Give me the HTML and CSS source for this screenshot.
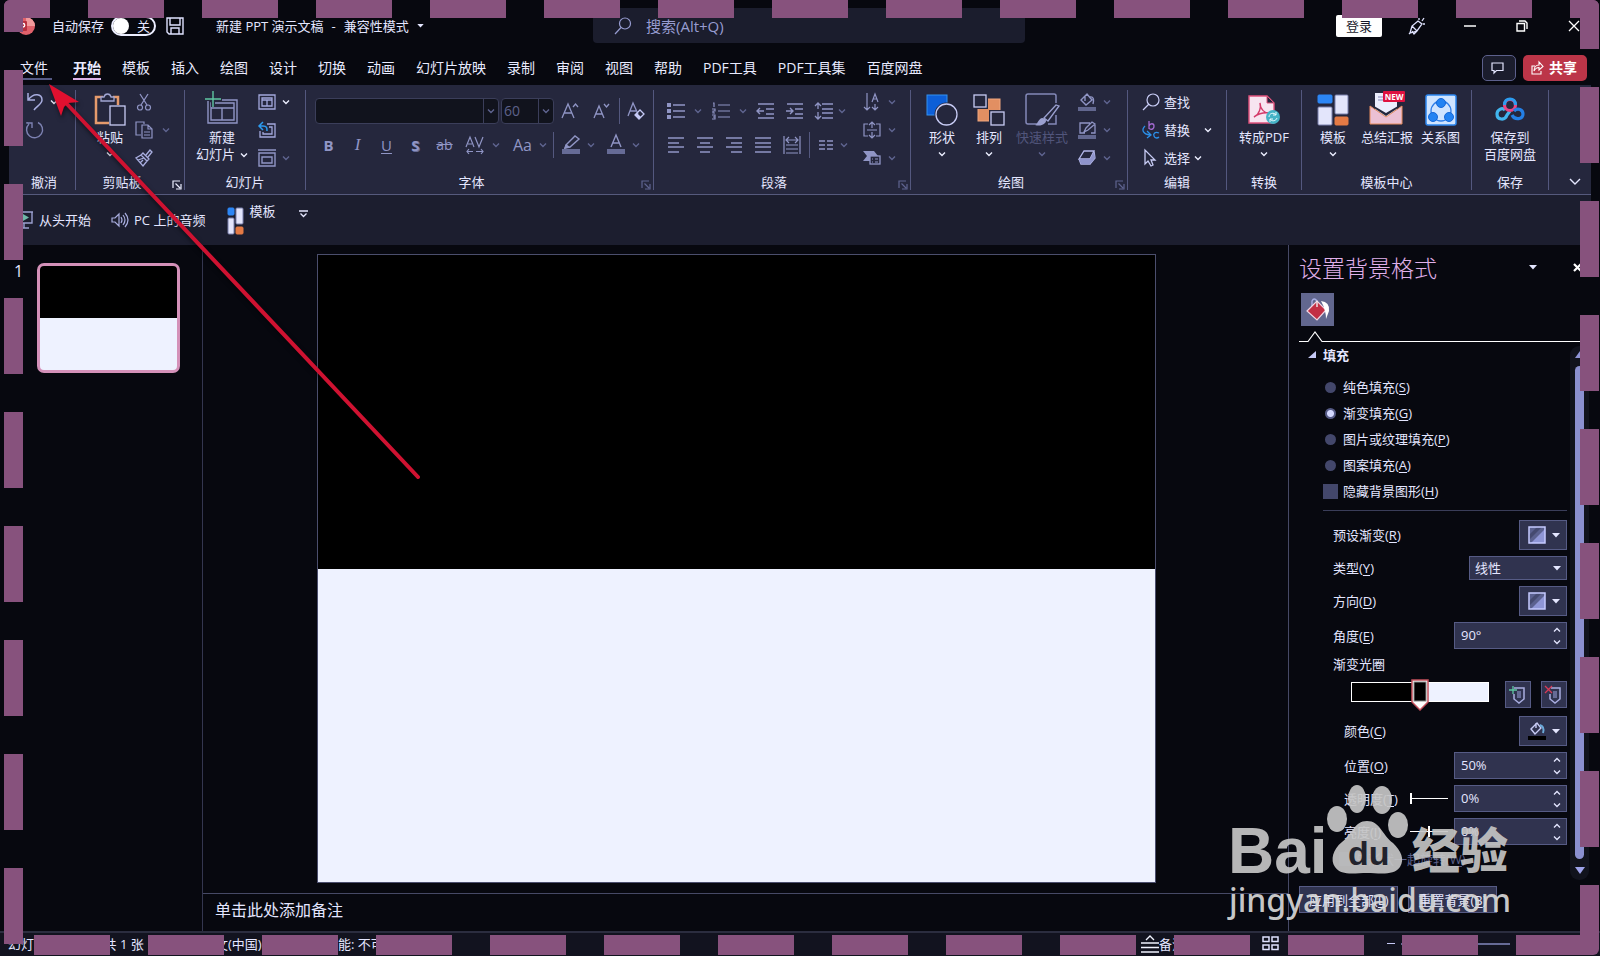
FILE: index.html
```html
<!DOCTYPE html>
<html lang="zh-CN">
<head>
<meta charset="utf-8">
<title>新建 PPT 演示文稿</title>
<link rel="stylesheet" href="styles.css">
</head>
<body>
<svg class="defs" aria-hidden="true">
  <symbol id="chev" viewBox="0 0 8 8"><path d="M1 2.5L4 5.5L7 2.5" fill="none" stroke="currentColor" stroke-width="1.4"/></symbol>
  <symbol id="launch" viewBox="0 0 10 10"><path d="M1 8V1H8M3.5 3.5L8 8M9 4V9H4" fill="none" stroke="currentColor" stroke-width="1.2"/></symbol>
  <symbol id="down" viewBox="0 0 8 5"><path d="M0 0H8L4 4.5Z" fill="currentColor"/></symbol>
  <symbol id="gradient" viewBox="0 0 18 18"><path d="M1 1H17V17H1Z" fill="#5b618f"/><path d="M3 17L17 3V17Z" fill="#8f96d6"/><path d="M1 1H14L1 14Z" fill="#454a70"/><path d="M1 1H9L1 9Z" fill="#5b618f"/><path d="M1 1H17V17H1Z" fill="none" stroke="#c5caff" stroke-width="1.5"/></symbol>
  <symbol id="spin" viewBox="0 0 8 18"><path d="M1 4.5L4 1.5L7 4.5M1 13.5L4 16.5L7 13.5" fill="none" stroke="currentColor" stroke-width="1.3"/></symbol>
  <symbol id="tiles" viewBox="0 0 32 32"><g stroke="#7b80ad"><rect x="1" y="1" width="14" height="8" rx="1" fill="#2c86f5" stroke="#2c86f5"/><rect x="1" y="13" width="14" height="18" rx="1" fill="#e3e5fb"/><rect x="18" y="1" width="13" height="19" rx="1" fill="#e3e5fb"/><rect x="18" y="23" width="13" height="8" rx="1" fill="#e47a45" stroke="#e47a45"/></g></symbol>
</svg>

<div class="window">
  <header class="titlebar">
    <div class="title-left">
      <svg class="logo" width="18" height="18" viewBox="0 0 18 18"><circle cx="9" cy="9" r="9" fill="#e0616b"/><path d="M9 0A9 9 0 0 1 18 9H9Z" fill="#f19a9c"/><rect x="0" y="4" width="10" height="10" rx="1" fill="#b8313f"/><path d="M4 12V6.500H6A1.700 1.700 0 0 1 6 10H4" fill="none" stroke="#fff" stroke-width="1.300"/></svg>
      <label for="autosave">自动保存</label>
      <span class="switch"><input type="checkbox" id="autosave"><span>关</span></span>
      <button class="plain save" aria-label="保存"><svg width="18" height="18" viewBox="0 0 18 18"><path d="M1 1H17V17H3L1 15ZM4 1V8H14V1M5 17V11H13V17" fill="none" stroke="#dfe2ff" stroke-width="1.400"/></svg></button>
      <button class="plain doc"><span>新建 PPT 演示文稿</span><span>-</span><span>兼容性模式</span><svg width="7" height="4"><use href="#down"/></svg></button>
    </div>
    <div class="search">
      <svg width="18" height="18" viewBox="0 0 18 18"><circle cx="11" cy="6.500" r="5.500" fill="none" stroke="#979cd0" stroke-width="1.200"/><path d="M7 10.500L1 17" stroke="#979cd0" stroke-width="1.200"/></svg>
      <input type="text" placeholder="搜索(Alt+Q)" aria-label="搜索">
    </div>
    <div class="title-right">
      <button class="login">登录</button>
      <button class="plain" aria-label="画笔"><svg width="18" height="18" viewBox="0 0 18 18"><path d="M2 16L4 9L10 4L14 7L9 14ZM2 16L1 17M4 9L9 14M9 14L6 17L4 14M11 3V1M14 4L16 1M15 7H17" fill="none" stroke="#e0e3ff" stroke-width="1.300"/></svg></button>
      <button class="plain" aria-label="最小化"><svg width="12" height="12"><path d="M0 6H12" stroke="#fff" stroke-width="1.500"/></svg></button>
      <button class="plain" aria-label="还原"><svg width="12" height="12" viewBox="0 0 12 12"><path d="M1 3.500H8.500V11H1ZM3 1H9L11 3V9" fill="none" stroke="#fff" stroke-width="1.400"/></svg></button>
      <button class="plain" aria-label="关闭"><svg width="12" height="12"><path d="M1 1L11 11M11 1L1 11" stroke="#fff" stroke-width="1.300"/></svg></button>
    </div>
  </header>

  <nav class="tabs">
    <a class="file" href="#">文件</a><a class="on" href="#">开始</a><a href="#">模板</a><a href="#">插入</a><a href="#">绘图</a><a href="#">设计</a><a href="#">切换</a><a href="#">动画</a><a href="#">幻灯片放映</a><a href="#">录制</a><a href="#">审阅</a><a href="#">视图</a><a href="#">帮助</a><a href="#">PDF工具</a><a href="#">PDF工具集</a><a href="#">百度网盘</a>
    <button class="comment" aria-label="批注"><svg width="13" height="12" viewBox="0 0 13 12"><path d="M1 1H12V8.500H5.500L3 11V8.500H1Z" fill="none" stroke="#e5e7ff" stroke-width="1.200"/></svg></button>
    <button class="share"><svg width="13" height="14" viewBox="0 0 13 14"><path d="M4 5H1V13H10V10M3 10C3 6 5 4 8 4V1L12 5.500L8 9V6.500C6 6.500 4.500 7 3 10" fill="none" stroke="#fff" stroke-width="1.100"/></svg>共享</button>
  </nav>

  <section class="ribbon">
    <div class="group g-undo">
      <div class="body rows">
        <div class="line"><button class="ic" aria-label="撤消"><svg width="18" height="20" viewBox="0 0 18 20"><path d="M2 1V8H9M2 8C8 0 16 2 16 8C16 12 11 14 8 18" fill="none" stroke="#a9aee0" stroke-width="1.500"/></svg></button><svg class="chev lit"><use href="#chev"/></svg></div>
        <div class="line"><button class="ic" aria-label="重复"><svg width="18" height="18" viewBox="0 0 18 18"><path d="M3 3A8 8 0 1 0 12 1.500M1 1V2H6V7" fill="none" stroke="#7d82b2" stroke-width="1.400"/></svg></button></div>
      </div>
      <h2>撤消</h2>
    </div>

    <div class="group g-clip">
      <div class="body">
        <button class="big"><svg width="32" height="34" viewBox="0 0 32 34"><path d="M9 4H2V30H15M19 4H24V12" fill="none" stroke="#e59a6c" stroke-width="2.500"/><path d="M7 8V4H10C11 0 16 0 17 4H20V8Z" fill="#25273d" stroke="#a1a6d2" stroke-width="1.300"/><rect x="16" y="13" width="15" height="19" fill="#25273d" stroke="#c8ccf5" stroke-width="1.300"/></svg><span>粘贴</span><svg class="chev lit"><use href="#chev"/></svg></button>
        <div class="rows">
          <div class="line"><button class="ic" aria-label="剪切"><svg width="18" height="18" viewBox="0 0 18 18"><path d="M5 1L12 12M13 1L6 12" stroke="#9095c5" stroke-width="1.300"/><g fill="none" stroke="#9095c5" stroke-width="1.200"><circle cx="5" cy="14.500" r="2.500"/><circle cx="13" cy="14.500" r="2.500"/></g></svg></button></div>
          <div class="line"><button class="ic" aria-label="复制"><svg width="18" height="18" viewBox="0 0 18 18"><path d="M6 14H1V1H9V3M7 4H13L17 8V17H7ZM13 4V8H17M9 11H15M9 14H15" fill="none" stroke="#9095c5" stroke-width="1.200"/></svg></button><svg class="chev"><use href="#chev"/></svg></div>
          <div class="line"><button class="ic" aria-label="格式刷"><svg width="18" height="18" viewBox="0 0 18 18"><path d="M11 6L15 1L17 3L13 8M8 4L14 10L12 12L6 6ZM6 6L1 9L8 17L12 12M3 11L9 9M5 14L8 11" fill="none" stroke="#a9aee0" stroke-width="1.300"/></svg></button></div>
        </div>
      </div>
      <h2>剪贴板</h2><svg class="launch lit"><use href="#launch"/></svg>
    </div>

    <div class="group g-slide">
      <div class="body">
        <button class="big"><svg width="34" height="30" viewBox="0 0 34 30"><path d="M3 5H32V28H3ZM6 8H29V25H6ZM6 13H29M17 13V25" fill="none" stroke="#9095c5" stroke-width="1.400"/><path d="M1 4H17M8 -3V12" stroke="#25273d" stroke-width="4"/><path d="M0 4H16M8 -4V12" stroke="#5fc7a2" stroke-width="1.400"/></svg><span>新建</span><span>幻灯片 <svg class="chev lit"><use href="#chev"/></svg></span></button>
        <div class="rows">
          <div class="line"><button class="ic" aria-label="版式"><svg width="18" height="16" viewBox="0 0 18 16"><path d="M1 1H17V15H1ZM4 4H14V12H4ZM4 6H14M9 6V12" fill="none" stroke="#a3a8dc" stroke-width="1.300"/></svg></button><svg class="chev lit"><use href="#chev"/></svg></div>
          <div class="line"><button class="ic" aria-label="重置"><svg width="18" height="16" viewBox="0 0 18 16"><path d="M9 2H17V15H2V9M11 5H14V12H5V10" fill="none" stroke="#a3a8dc" stroke-width="1.300"/><path d="M5 0L1 4L5 8M1 4H5C9 4 9 6 9 9" fill="none" stroke="#2c9bf0" stroke-width="1.500"/></svg></button></div>
          <div class="line"><button class="ic" aria-label="节"><svg width="18" height="18" viewBox="0 0 18 18"><path d="M0 1H18M1 4H17V17H1ZM4 8H14V14H4Z" fill="none" stroke="#9095c5" stroke-width="1.400"/></svg></button><svg class="chev"><use href="#chev"/></svg></div>
        </div>
      </div>
      <h2>幻灯片</h2>
    </div>

    <div class="group g-font">
      <div class="body bars">
        <div class="bar">
          <span class="combo name"><input type="text" aria-label="字体"><button aria-label="字体列表"><svg class="chev"><use href="#chev"/></svg></button></span>
          <span class="combo size"><input type="text" value="60" aria-label="字号"><button aria-label="字号列表"><svg class="chev"><use href="#chev"/></svg></button></span>
          <button class="t wide" aria-label="增大字号"><svg width="18" height="18" viewBox="0 0 18 18"><path d="M1 16L7 2L13 16M3 11H11M12 5L14.500 2L17 5" fill="none" stroke="#9095c5" stroke-width="1.300"/></svg></button>
          <button class="t" aria-label="减小字号"><svg width="18" height="18" viewBox="0 0 18 18"><path d="M2 16L7 4L12 16M4 12H10M12 2L14.500 5L17 2" fill="none" stroke="#9095c5" stroke-width="1.300"/></svg></button>
          <i class="sep"></i>
          <button class="t" aria-label="清除格式"><svg width="18" height="18" viewBox="0 0 18 18"><path d="M1 14L6 1L11 12M3 9H9" fill="none" stroke="#9095c5" stroke-width="1.300"/><path d="M8 13L13 8L17 12L12 17Z" fill="none" stroke="#c5c9f5" stroke-width="1.300"/><path d="M8 13L10 11L14 15L12 17Z" fill="#c5c9f5"/></svg></button>
        </div>
        <div class="bar two">
          <button class="t"><b>B</b></button><button class="t"><em>I</em></button><button class="t"><u>U</u></button><button class="t shadow"><b>S</b></button><button class="t strike"><s>ab</s></button>
          <button class="t av" aria-label="字符间距"><svg width="18" height="20" viewBox="0 0 18 20"><path d="M0 12L4 2L8 12M2 9H6M9 2L13 12L17 2M1 16.500H7M3 14L1 16.500L3 19M10 16.500H17M15 14L17 16.500L15 19" fill="none" stroke="#9095c5" stroke-width="1.200"/></svg></button><svg class="chev"><use href="#chev"/></svg>
          <button class="t case">Aa</button><svg class="chev"><use href="#chev"/></svg>
          <i class="sep"></i>
          <button class="t" aria-label="突出显示"><svg width="18" height="20" viewBox="0 0 18 20"><path d="M4 10L13 1L17 4L8 12L3 13Z" fill="none" stroke="#9095c5" stroke-width="1.400"/><path d="M4 9L8 12L2 14Z" fill="#9095c5"/><rect y="14" width="18" height="5" fill="#666b96"/></svg></button><svg class="chev"><use href="#chev"/></svg>
          <button class="t" aria-label="字体颜色"><svg width="18" height="20" viewBox="0 0 18 20"><path d="M4 12L9 0L14 12M6 8H12" fill="none" stroke="#9095c5" stroke-width="1.400"/><rect y="14" width="18" height="5" fill="#666b96"/></svg></button><svg class="chev"><use href="#chev"/></svg>
        </div>
      </div>
      <h2>字体</h2><svg class="launch"><use href="#launch"/></svg>
    </div>

    <div class="group g-para">
      <div class="body">
        <div class="bars">
          <div class="bar">
            <button class="t" aria-label="项目符号"><svg width="18" height="18" viewBox="0 0 18 18"><path d="M6 3H18M6 9H18M6 15H18" stroke="#9095c5" stroke-width="1.400"/><path d="M0 1H4V5H0ZM0 7H4V11H0ZM0 13H4V17H0Z" fill="#9095c5"/></svg></button><svg class="chev far"><use href="#chev"/></svg>
            <button class="t" aria-label="编号"><svg width="18" height="18" viewBox="0 0 18 18"><path d="M6 3H18M6 9H18M6 15H18M1 1H2V5M0 7H3V9H1V11H3M0 13H3V17H0M1 15H3" fill="none" stroke="#9095c5" stroke-width="1.200"/></svg></button><svg class="chev far"><use href="#chev"/></svg>
            <button class="t" aria-label="减少缩进"><svg width="18" height="18" viewBox="0 0 18 18"><path d="M1 2H17M9 7H17M9 12H17M1 16H17M0 9H7M3 6L0 9L3 12" fill="none" stroke="#9095c5" stroke-width="1.400"/></svg></button><button class="t" aria-label="增加缩进"><svg width="18" height="18" viewBox="0 0 18 18"><path d="M1 2H17M9 7H17M9 12H17M1 16H17M0 9H7M4 6L7 9L4 12" fill="none" stroke="#9095c5" stroke-width="1.400"/></svg></button><button class="t" aria-label="行距"><svg width="18" height="18" viewBox="0 0 18 18"><path d="M7 2H18M7 7H18M7 11H18M7 16H18M3 1V7M0 4L3 1L6 4M3 10V17M0 14L3 17L6 14" fill="none" stroke="#9095c5" stroke-width="1.300"/></svg></button><svg class="chev"><use href="#chev"/></svg>
          </div>
          <div class="bar">
            <button class="t" aria-label="左对齐"><svg width="18" height="18"><path d="M1 2H17M1 7H12M1 11H17M1 16H12" stroke="#9095c5" stroke-width="1.400"/></svg></button><button class="t" aria-label="居中"><svg width="18" height="18"><path d="M1 2H17M4 7H14M1 11H17M4 16H14" stroke="#9095c5" stroke-width="1.400"/></svg></button><button class="t" aria-label="右对齐"><svg width="18" height="18"><path d="M1 2H17M6 7H17M1 11H17M6 16H17" stroke="#9095c5" stroke-width="1.400"/></svg></button><button class="t" aria-label="两端对齐"><svg width="18" height="18"><path d="M1 2H17M1 7H17M1 11H17M1 16H17" stroke="#9095c5" stroke-width="1.400"/></svg></button><button class="t" aria-label="分散对齐"><svg width="18" height="18" viewBox="0 0 18 18"><path d="M1 0V18M17 0V18M3 9H15M3 13H15M3 17H15M3 4H15M6 1L3 4L6 7M12 1L15 4L12 7" fill="none" stroke="#9095c5" stroke-width="1.200"/></svg></button>
            <i class="sep"></i>
            <button class="t" aria-label="分栏"><svg width="18" height="18"><path d="M2 5H8M2 9H8M2 13H8M10 5H16M10 9H16M10 13H16" stroke="#9095c5" stroke-width="1.400"/></svg></button><svg class="chev"><use href="#chev"/></svg>
          </div>
        </div>
        <div class="rows">
          <div class="line"><button class="ic" aria-label="文字方向"><svg width="18" height="18" viewBox="0 0 18 18"><path d="M4 0V17M1 14L4 17L7 14M12 11V17M9 14L12 17L15 14M9 9L12 1L15 9M10 6H14" fill="none" stroke="#9095c5" stroke-width="1.200"/></svg></button><svg class="chev"><use href="#chev"/></svg></div>
          <div class="line"><button class="ic" aria-label="对齐文本"><svg width="18" height="18" viewBox="0 0 18 18"><path d="M5 3H1V15H5M13 3H17V15H13M9 1V7M6 4L9 1L12 4M9 11V17M6 14L9 17L12 14M4 9H14" fill="none" stroke="#9095c5" stroke-width="1.200"/></svg></button><svg class="chev"><use href="#chev"/></svg></div>
          <div class="line"><button class="ic" aria-label="转换为 SmartArt"><svg width="18" height="16" viewBox="0 0 18 16"><path d="M0 1H11L15 6H7V11H0L4 6Z" fill="#9095c5"/><rect x="7" y="6" width="10" height="8" fill="#25273d" stroke="#9095c5" stroke-width="1.300"/><path d="M9 9H10M9 12H10M12 9H15M12 12H15" stroke="#9095c5"/></svg></button><svg class="chev"><use href="#chev"/></svg></div>
        </div>
      </div>
      <h2>段落</h2><svg class="launch"><use href="#launch"/></svg>
    </div>

    <div class="group g-draw">
      <div class="body">
        <button class="big"><svg width="32" height="32" viewBox="0 0 32 32"><rect x="1" y="1" width="20" height="20" fill="#0d5fd8" stroke="#3591f0"/><circle cx="20.500" cy="20.500" r="12" fill="#25273d"/><circle cx="20.500" cy="20.500" r="10.500" fill="#25273d" stroke="#c8ccf5" stroke-width="1.300"/></svg><span>形状</span><svg class="chev lit"><use href="#chev"/></svg></button>
        <button class="big"><svg width="32" height="32" viewBox="0 0 32 32"><rect x="5" y="5" width="22" height="22" fill="#e28f62" stroke="#f0a67f"/><g fill="#25273d" stroke="#25273d" stroke-width="4"><rect x="1" y="1" width="12" height="12"/><rect x="18" y="18" width="13" height="13"/></g><g fill="#25273d" stroke="#c8ccf5" stroke-width="1.300"><rect x="1" y="1" width="12" height="12"/><rect x="18" y="18" width="13" height="13"/></g></svg><span>排列</span><svg class="chev lit"><use href="#chev"/></svg></button>
        <button class="big dim"><svg width="34" height="34" viewBox="0 0 34 34"><path d="M12 31H3Q1 31 1 29V3Q1 1 3 1H29Q31 1 31 3V10M31 22V31H23" fill="none" stroke="#8489b8" stroke-width="1.500"/><path d="M19 25L31 12L34 13L23 28Z" fill="#25273d" stroke="#9ba0d0" stroke-width="1.300"/><path d="M10 32C13 31 13 26 17 25C21 25 22 28 20 30C17 33 13 33 10 32Z" fill="#9ba0d0"/></svg><span>快速样式</span><svg class="chev"><use href="#chev"/></svg></button>
        <div class="rows">
          <div class="line"><button class="ic" aria-label="形状填充"><svg width="18" height="18" viewBox="0 0 18 18"><path d="M3 7L9 1L14 7L8 12ZM7 3V8M12 4C16 3 16 8 15 11" fill="none" stroke="#9095c5" stroke-width="1.400"/><rect y="14" width="18" height="4" fill="#62678f"/></svg></button><svg class="chev"><use href="#chev"/></svg></div>
          <div class="line"><button class="ic" aria-label="形状轮廓"><svg width="18" height="18" viewBox="0 0 18 18"><path d="M12 2H2V12H7M17 4V12H13M6 11L8 7L14 1L17 3L10 9Z" fill="none" stroke="#9095c5" stroke-width="1.300"/><rect y="14" width="18" height="4" fill="#62678f"/></svg></button><svg class="chev"><use href="#chev"/></svg></div>
          <div class="line"><button class="ic" aria-label="形状效果"><svg width="18" height="16" viewBox="0 0 18 16"><path d="M6 1H16L12 9H1ZM1 9L3 14H12V9M12 14L17 8L16 1" fill="none" stroke="#b4b8ea" stroke-width="1.300"/><path d="M1 9H12V14H3ZM12 9L16 2L17 8L12 14Z" fill="#8f94cc"/></svg></button><svg class="chev"><use href="#chev"/></svg></div>
        </div>
      </div>
      <h2>绘图</h2><svg class="launch"><use href="#launch"/></svg>
    </div>

    <div class="group g-edit">
      <div class="body rows">
        <button class="line"><svg width="18" height="18" viewBox="0 0 18 18"><circle cx="11" cy="7" r="6" fill="none" stroke="#c8ccf5" stroke-width="1.200"/><path d="M7 11L1 17" stroke="#c8ccf5" stroke-width="1.200"/></svg>查找</button>
        <button class="line"><svg width="18" height="18" viewBox="0 0 18 18"><path d="M7 0V8M7 5C8 2 12 2 12 5C12 9 8 9 7 7" fill="none" stroke="#a36ad0" stroke-width="1.300"/><path d="M3 5C-1 9 1 13 8 14M5 10L9 14L5 17M17 12C13 10 11 13 12 15C13 18 16 17 17 16" fill="none" stroke="#2b8fe8" stroke-width="1.300"/></svg>替换<svg class="chev lit push"><use href="#chev"/></svg></button>
        <button class="line"><svg width="18" height="18" viewBox="0 0 18 18"><path d="M3 1V15L6 12L9 17L11 16L9 11H13Z" fill="none" stroke="#c8ccf5" stroke-width="1.300"/></svg>选择<svg class="chev lit"><use href="#chev"/></svg></button>
      </div>
      <h2>编辑</h2>
    </div>

    <div class="group g-conv">
      <div class="body">
        <button class="big"><svg width="32" height="34" viewBox="0 0 32 34"><path d="M1 3H19L26 10V30H1Z" fill="#f7e4f0" stroke="#e0527c" stroke-width="1.400"/><path d="M19 3V10H26Z" fill="#25273d" stroke="#e0527c"/><path d="M6 24C12 21 13 14 12 10C12 16 17 21 22 20C16 19 10 21 6 24Z" fill="none" stroke="#d43a6a" stroke-width="1.400"/><circle cx="25" cy="24" r="7" fill="#45b3c6"/><path d="M21 24C21 20 26 19 28 22M28 19V22H25M29 25C28 28 24 29 22 26M22 29V26H25" fill="none" stroke="#e8fbff"/></svg><span>转成PDF</span><svg class="chev lit"><use href="#chev"/></svg></button>
      </div>
      <h2>转换</h2>
    </div>

    <div class="group g-tpl">
      <div class="body">
        <button class="big"><svg width="32" height="32"><use href="#tiles"/></svg><span>模板</span><svg class="chev lit"><use href="#chev"/></svg></button>
        <button class="big"><svg width="36" height="34" viewBox="0 0 36 34"><path d="M6 0H28V18L17 26L6 19Z" fill="#eceefe"/><path d="M9 4H15M9 7H15" stroke="#8287b8"/><path d="M1 13L17 24L33 13V31H1Z" fill="#ebc0d4" stroke="#e58b5c"/><path d="M5 15L17 23L29 15V13L17 20L5 13Z" fill="#25273d"/><rect x="14" y="-2" width="22" height="11" rx="1" fill="#df1240"/><text x="25" y="7" class="new">NEW</text></svg><span>总结汇报</span></button>
        <button class="big"><svg width="32" height="32" viewBox="0 0 32 32"><rect x="1" y="1" width="30" height="30" rx="2" fill="#cfe4ff" stroke="#2d87f0" stroke-width="1.500"/><circle cx="16" cy="17" r="10" fill="none" stroke="#2d7de8" stroke-width="1.300"/><g fill="#2383f2" stroke="#1668d8"><circle cx="16" cy="9" r="4.500"/><circle cx="8" cy="23" r="4.500"/><circle cx="24" cy="23" r="4.500"/></g></svg><span>关系图</span></button>
      </div>
      <h2>模板中心</h2>
    </div>

    <div class="group g-save">
      <div class="body">
        <button class="big"><svg width="30" height="30" viewBox="0 0 30 30"><g fill="none" stroke-width="3.200"><path d="M10 15C7 12 2 15 2 19C2 25 10 26 12 20L15 16" stroke="#41b5ee"/><circle cx="15" cy="10" r="5.500" stroke="#e84584"/><path d="M9.500 10C9.500 6 12 4 15 4C18 4 20.500 6 20.500 10" stroke="#2b9df0"/><path d="M17 20C20 26 28 24 28 19C28 15 23 12 19 16" stroke="#247fe5"/></g></svg><span>保存到</span><span>百度网盘</span></button>
      </div>
      <h2>保存</h2>
    </div>
    <button class="collapse" aria-label="折叠功能区"><svg width="12" height="8"><path d="M1 1L6 6L11 1" fill="none" stroke="#e5e7ff" stroke-width="1.400"/></svg></button>
  </section>

  <section class="quick">
    <button class="plain"><svg width="20" height="18" viewBox="0 0 20 18"><path d="M1 1H19M2 1V12H18V1M10 12V17M5 17H15" fill="none" stroke="#9ba0d0" stroke-width="1.400"/><path d="M9 3L15 6.500L9 10Z" fill="#6fb7a8"/></svg>从头开始</button>
    <button class="plain audio"><svg width="18" height="16" viewBox="0 0 18 16"><path d="M1 6H4L8 2V14L4 10H1ZM10 5Q12 8 10 11M12 3Q16 8 12 13M14 1Q20 8 14 15" fill="none" stroke="#a9aee0" stroke-width="1.200"/></svg>PC 上的音频</button>
    <button class="plain tpl"><svg width="17" height="28" viewBox="0 0 17 28"><g stroke="#7b80ad"><rect x="1" y="1" width="6" height="7" rx="1" fill="#2c86f5" stroke="#2c86f5"/><rect x="1" y="11" width="6" height="16" rx="1" fill="#e3e5fb"/><rect x="9" y="1" width="7" height="16" rx="1" fill="#e3e5fb"/><rect x="9" y="20" width="7" height="7" rx="1" fill="#e47a45" stroke="#e47a45"/></g></svg><span>模板</span></button>
    <button class="plain more" aria-label="自定义"><svg width="9" height="8"><path d="M0 1H9M1.500 3.500L4.500 6.500L7.500 3.500" fill="none" stroke="#e5e7ff" stroke-width="1.300"/></svg></button>
  </section>

  <main class="work">
    <aside class="thumbs"><span>1</span><button class="thumb" aria-label="幻灯片 1"></button></aside>
    <div class="stage">
      <div class="canvas"><div class="slide"></div></div>
      <div class="notes">单击此处添加备注</div>
    </div>
    <aside class="pane">
      <div class="pane-head"><h1>设置背景格式</h1>
        <button class="plain" aria-label="选项"><svg width="8" height="5"><use href="#down"/></svg></button>
        <button class="plain" aria-label="关闭窗格"><svg width="9" height="9"><path d="M1 1L8 8M8 1L1 8" stroke="#fff" stroke-width="2.200"/></svg></button>
      </div>
      <button class="fill-tab" aria-label="填充"><svg width="24" height="24" viewBox="0 0 24 24"><path d="M6 10V3Q8 -1 11 3V9" fill="none" stroke="#aab0e5" stroke-width="1.400"/><path d="M1 13L11 3L20 12L11 22Z" fill="#c22f45" stroke="#f1d5e2" stroke-width="1.200"/><path d="M15 3Q24 4 23 13L20 21Q20 12 15 3Z" fill="#fff"/><path d="M11 3V9" stroke="#eee" stroke-width="1.400"/></svg></button>
      <div class="rule"><svg width="34" height="11"><path d="M0 10.500H9L16 1L23 10.500H34" fill="none" stroke="#fff" stroke-width="1.200"/></svg></div>
      <div class="pane-main">
        <div class="form">
          <h3><svg width="8" height="8"><path d="M8 0V7H0Z" fill="#c5c9f5"/></svg>填充</h3>
          <div class="choices">
            <label><input type="radio" name="fill"><span>纯色填充(<u>S</u>)</span></label>
            <label><input type="radio" name="fill" checked><span>渐变填充(<u>G</u>)</span></label>
            <label><input type="radio" name="fill"><span>图片或纹理填充(<u>P</u>)</span></label>
            <label><input type="radio" name="fill"><span>图案填充(<u>A</u>)</span></label>
            <label><input type="checkbox"><span>隐藏背景图形(<u>H</u>)</span></label>
          </div>
          <div class="fields">
            <div class="field"><span>预设渐变(<u>R</u>)</span><button class="drop" aria-label="预设渐变"><svg width="18" height="18"><use href="#gradient"/></svg><svg width="8" height="5"><use href="#down"/></svg></button></div>
            <div class="field"><label for="kind">类型(<u>Y</u>)</label><span class="pick"><select id="kind"><option>线性</option></select><svg width="8" height="5"><use href="#down"/></svg></span></div>
            <div class="field"><span>方向(<u>D</u>)</span><button class="drop" aria-label="方向"><svg width="18" height="18"><use href="#gradient"/></svg><svg width="8" height="5"><use href="#down"/></svg></button></div>
            <div class="field"><label for="angle">角度(<u>E</u>)</label><span class="num"><input id="angle" type="text" value="90°"><svg width="8" height="18"><use href="#spin"/></svg></span></div>
            <div class="field low"><span>渐变光圈</span></div>
            <div class="field stops">
              <div class="ramp"><svg width="18" height="32" viewBox="0 0 18 32"><path d="M1 1H17V23L9 31L1 23Z" fill="#fff" stroke="#c4505c" stroke-width="1.500"/><rect x="3" y="3" width="12" height="19" fill="#000" stroke="#888"/></svg></div>
              <button class="sq" aria-label="添加光圈"><svg width="18" height="20" viewBox="0 0 18 20"><path d="M5 3H15V14L10 18L5 14V9" fill="none" stroke="#a9aee0" stroke-width="1.500"/><path d="M8 6H12V13H8Z" fill="#666b96"/><path d="M0 5H8M4 1V9" stroke="#5fc7a2" stroke-width="1.300"/></svg></button>
              <button class="sq" aria-label="删除光圈"><svg width="18" height="20" viewBox="0 0 18 20"><path d="M6 3H15V14L10 18L5 14V9" fill="none" stroke="#a9aee0" stroke-width="1.500"/><path d="M8 6H12V13H8Z" fill="#666b96"/><path d="M0 1L7 8M7 1L0 8" stroke="#d83b58" stroke-width="1.300"/></svg></button>
            </div>
            <div class="field in"><span>颜色(<u>C</u>)</span><button class="drop" aria-label="颜色"><svg width="18" height="18" viewBox="0 0 18 18"><path d="M3 7L9 1L13 6L7 12ZM8 1V6" fill="none" stroke="#c8ccf5" stroke-width="1.400"/><path d="M12 3Q17 5 15 11" fill="none" stroke="#6aa9d8" stroke-width="2"/><rect y="14" width="18" height="4" fill="#000"/></svg><svg width="8" height="5"><use href="#down"/></svg></button></div>
            <div class="field in"><label for="pos">位置(<u>O</u>)</label><span class="num"><input id="pos" type="text" value="50%"><svg width="8" height="18"><use href="#spin"/></svg></span></div>
            <div class="field in"><label for="alpha">透明度(<u>T</u>)</label><input class="slide-bar" type="range" value="0" aria-label="透明度"><span class="num"><input id="alpha" type="text" value="0%"><svg width="8" height="18"><use href="#spin"/></svg></span></div>
            <div class="field in"><label for="light">亮度(<u>I</u>)</label><input class="slide-bar" type="range" value="50" aria-label="亮度"><span class="num"><input id="light" type="text" value="0%"><svg width="8" height="18"><use href="#spin"/></svg></span></div>
            <label class="rotate"><input type="checkbox" disabled><span>与形状一起旋转(<u>W</u>)</span></label>
          </div>
        </div>
        <div class="scroll"><svg width="10" height="7"><path d="M5 0L10 7H0Z" fill="#8f94d6"/></svg><i></i><svg width="10" height="7"><path d="M0 0H10L5 7Z" fill="#9ea3ea"/></svg></div>
      </div>
      <div class="actions"><button>应用到全部(<u>L</u>)</button><button>重置背景(<u>B</u>)</button></div>
    </aside>
  </main>

  <footer class="status">
    <span class="s-page">幻灯片 第 1 张，共 1 张</span><span class="s-lang">中文(中国)</span><span>辅助功能: 不可用</span>
    <button class="plain s-notes"><svg width="18" height="18" viewBox="0 0 18 18"><path d="M5 5L9 1L13 5M0 8H18M0 12.500H18M0 17H18" fill="none" stroke="#f1f3ff" stroke-width="1.300"/></svg>备注</button>
    <button class="plain s-grid" aria-label="浏览"><svg width="17" height="15" viewBox="0 0 17 15"><path d="M1 1H7V5.500H1ZM10 1H16V5.500H10ZM1 9H7V13.500H1ZM10 9H16V13.500H10Z" fill="none" stroke="#dfe2ff" stroke-width="1.500"/></svg></button>
    <span class="zoom"><button class="plain" aria-label="缩小"><svg width="8" height="8"><path d="M0 3.500H8" stroke="#c5c9f5"/></svg></button><input type="range" aria-label="缩放"><button class="plain" aria-label="放大"><svg width="9" height="8"><path d="M0 4H9M4.500 0V8" stroke="#c5c9f5"/></svg></button></span>
  </footer>
</div>

<div class="mark" aria-hidden="true">
  <svg width="290" height="140" viewBox="0 0 290 140">
    <g fill="#c6c6c6" fill-opacity=".92">
      <text x="2" y="88" class="brand">Bai</text>
      <ellipse cx="111" cy="34" rx="10" ry="13"/><ellipse cx="131" cy="14" rx="9" ry="14"/><ellipse cx="156" cy="15" rx="10" ry="14"/><ellipse cx="172" cy="40" rx="10" ry="13"/>
      <path d="M141 36C128 36 127 49 116 57C107 64 104 75 109 82C115 91 128 88 141 88C153 88 168 91 174 82C179 74 175 66 167 58C156 50 154 36 141 36Z"/>
      <text x="186" y="83" class="cjk">经验</text>
    </g>
    <text x="122" y="80" class="du">du</text>
    <text x="3" y="127" class="site">jingyan.baidu.com</text>
  </svg>
</div>
<svg class="arrow" width="440" height="490" viewBox="0 0 440 490" aria-hidden="true"><path d="M66 103L418 477" stroke="#cf1231" stroke-width="4" stroke-linecap="round"/><path d="M49 84L79 102L68 103L64 107L61 116Z" fill="#e0102f"/></svg>
<div class="frame" aria-hidden="true"><i class="top"></i><i class="left"></i><i class="right"></i><i class="bottom"></i></div>
</body>
</html>
```
FILE: styles.css
```css
* { box-sizing: border-box; }
body { margin: 0; background: #07080f; color: #e4e6ff; font: 13px/16px "Open Sans", "Noto Sans CJK SC", sans-serif; overflow: hidden; }
button, input, select { font: inherit; color: inherit; margin: 0; padding: 0; border: 0; background: none; border-radius: 0; outline: 0; }
button { display: flex; align-items: center; white-space: nowrap; }
svg { flex: none; display: block; overflow: visible; }
h1, h2, h3 { margin: 0; font: inherit; }
u { text-underline-offset: 2px; }
.defs { position: absolute; width: 0; height: 0; }
.plain { gap: 6px; }
.window { min-height: 100vh; display: flex; flex-direction: column; }

.titlebar { height: 51px; display: flex; align-items: center; }
.title-left { width: 37%; display: flex; align-items: center; padding-left: 17px; }
.title-left label { margin-left: 17px; }
.switch { position: relative; display: flex; align-items: center; margin: 0 10px 0 7px; }
.switch input { appearance: none; width: 45px; height: 20px; border: 2px solid #eceeff; border-radius: 10px; }
.switch input::before { content: ""; display: block; width: 16px; height: 16px; border-radius: 8px; background: #fff; }
.switch span { position: absolute; right: 6px; }
.doc { margin-left: 32px; gap: 8px; }
.search { width: 27%; height: 35px; display: flex; align-items: center; gap: 14px; margin-left: 1px; padding-left: 21px; background: #1b1d2d; border-radius: 4px; font-size: 15px; color: #979cd0; }
.search input { flex: 1; height: 24px; }
.search input::placeholder { color: #979cd0; opacity: 1; }
.title-right { flex: 1; display: flex; align-items: center; justify-content: flex-end; padding-right: 20px; }
.title-right button + button { margin-left: 40px; }
.title-right .login + button { margin-left: 26px; }
.title-right .login + button + button { margin-left: 38px; }
.login { height: 22px; padding: 0 10px; background: #fff; color: #15172a; border-radius: 2px; }

.tabs { height: 34px; display: flex; align-items: center; gap: 21px; padding: 0 13px 0 20px; font-size: 14px; line-height: 20px; }
.tabs a { color: #e9ebff; text-decoration: none; border-bottom: 2px solid transparent; padding-top: 2px; white-space: nowrap; }
.tabs .file { border-color: #565a85; padding-right: 4px; }
.tabs .on { font-weight: 700; border-color: #dcb3e8; }
.comment { width: 34px; height: 26px; margin: 0 -14px 0 auto; padding-left: 8px; border: 1px solid #5c608c; border-radius: 5px; background: #1b1d2d; }
.share { width: 64px; height: 26px; gap: 5px; padding-left: 8px; border-radius: 5px; background: #bc3548; color: #fff; font-weight: 700; font-size: 14px; }

.ribbon { display: flex; height: 110px; margin: 0 9px; padding: 5px 0 4px; background: #25273d; border-bottom: 1px solid #565a7d; }
.group { position: relative; flex: none; display: flex; flex-direction: column; border-right: 1px solid #54587f; }
.group h2 { text-align: center; line-height: 16px; padding-right: 16px; }
.body { flex: 1; display: flex; align-items: flex-start; }
.rows { display: flex; flex-direction: column; align-items: flex-start; gap: 4px; }
.line { display: flex; align-items: center; height: 24px; gap: 6px; }
.line button { width: 18px; height: 24px; }
.big { flex-direction: column; padding-top: 3px; }
.big > svg:first-child { margin-bottom: 2px; height: 34px; }
.big > span { display: flex; align-items: center; gap: 5px; line-height: 17px; }
.big > .chev { margin-top: 4px; }
.dim { color: #51557b; }
.chev { width: 8px; height: 8px; color: #5f6490; }
.lit { color: #eceeff; }
.launch { position: absolute; right: 2px; bottom: 0; width: 10px; height: 10px; }
.launch:not(.lit) { color: #5f6490; }
.g-undo { width: 67px; padding-left: 17px; }
.g-undo h2 { padding-right: 13px; }
.g-clip { width: 109px; }
.g-clip .body { padding-left: 18px; gap: 9px; }
.g-clip .line { gap: 9px; }
.g-slide { width: 121px; }
.g-slide .body { padding-left: 11px; gap: 10px; }
.g-slide h2, .g-edit h2, .g-conv h2, .g-tpl h2, .g-save h2 { padding-right: 0; }
.g-font { width: 348px; }
.g-para { width: 257px; }
.bars { display: flex; flex-direction: column; align-items: flex-start; gap: 8px; padding-top: 8px; }
.bar { display: flex; align-items: center; height: 26px; }
.g-font .bar { padding-left: 9px; }
.g-font .two { padding-left: 8px; }
.combo { display: flex; height: 26px; background: #11131d; border: 1px solid #3b3e5a; border-radius: 4px; color: #5d618a; }
.combo input { width: 100%; min-width: 0; padding-left: 2px; font-size: 14px; }
.combo button { width: 15px; flex: none; justify-content: center; border-left: 1px solid #3b3e5a; }
.name { width: 184px; margin-right: 2px; }
.size { width: 53px; }
.t { width: 29px; height: 26px; justify-content: center; color: #9095c5; font-size: 15px; }
.t em { font-family: "Liberation Serif", serif; font-size: 17px; }
.t.wide { width: 32px; }
.t.av { width: 31px; }
.shadow { text-shadow: 1px 1px #666b96; }
.strike { font-size: 14px; }
.case { margin-left: 6px; font-size: 16px; }
.two .chev { margin: 0 2px; }
.two .sep { margin: 0 2px 0 4px; }
.two .chev + .t:last-of-type { margin-left: 4px; }
.sep { width: 1px; height: 26px; background: #54587f; }
.g-font .bar:not(.two) .sep { margin: 0 0 0 4px; }
.g-font .bar:not(.two) .sep + .t { width: 31px; }
.g-para .body { padding-left: 7px; }
.g-para .bars { width: 202px; }
.g-para .sep { margin: 0 1px 0 3px; }
.far { margin: 0 1px 0 4px; }
.far + .t { margin-left: 3px; }
.g-draw { width: 217px; }
.g-draw .body { padding-left: 15px; }
.g-draw .big { margin-right: 15px; }
.g-draw .big + .big { margin-right: 11px; }
.g-draw .big + .big.dim { margin-right: 10px; }
.g-draw .line, .g-para .line { gap: 7px; }
.g-edit { width: 99px; }
.g-edit .body { padding-left: 14px; }
.g-edit .line { gap: 4px; }
.push { margin-left: 10px; }
.g-conv { width: 75px; }
.g-conv .body, .g-save .body { justify-content: center; }
.g-tpl { width: 170px; }
.g-tpl .body { padding-left: 15px; }
.g-tpl .big + .big { margin-left: 12px; }
.g-tpl .big + .big + .big { margin-left: 8px; }
.new { font: 700 8px "Open Sans", sans-serif; fill: #fff; text-anchor: middle; }
.g-save { width: 77px; }
.collapse { margin-left: auto; align-self: flex-end; padding: 0 10px 4px 0; }

.quick { display: flex; align-items: center; height: 50px; margin: 0 9px; padding-left: 5px; background: #1c1e2f; }
.quick .plain { gap: 5px; }
.quick .audio { margin-left: 20px; }
.quick .tpl { margin-left: 22px; padding-top: 2px; }
.quick .tpl span { align-self: flex-start; margin-top: -4px; }
.quick .more { margin: 0 0 12px 24px; }

.work { flex: 1; display: flex; min-height: 0; }
.thumbs { width: 203px; display: flex; align-items: flex-start; gap: 15px; padding: 18px 0 0 14px; border-right: 1px solid #34364f; font-size: 16px; }
.thumbs span { width: 8px; }
.thumb { width: 143px; height: 110px; border: 3px solid #d491b9; border-radius: 7px; background: linear-gradient(#000 50%, #eef2ff 50%); }
.stage { flex: 1; min-width: 0; display: flex; flex-direction: column; }
.canvas { flex: 1; min-height: 0; display: flex; justify-content: center; padding: 9px 18px 10px 0; }
.slide { height: 100%; aspect-ratio: 4 / 3; border: 1px solid #4b4e6d; background: linear-gradient(#000 50%, #eef2ff 50%); }
.notes { height: 38px; padding: 7px 12px; border-top: 1px solid #464966; font-size: 16px; line-height: 18px; }
.pane { width: 312px; border-left: 1px solid #464966; padding-left: 10px; display: flex; flex-direction: column; }
.pane-head { display: flex; align-items: center; height: 45px; padding-right: 18px; }
.pane-head h1 { flex: 1; font-size: 23px; line-height: 30px; font-weight: 300; color: #e0b0ea; }
.pane-head button + button { margin-left: 36px; }
.fill-tab { width: 33px; height: 33px; margin: 3px 0 0 2px; justify-content: center; background: #62678f; }
.rule { display: flex; align-items: flex-end; height: 16px; }
.rule::after { content: ""; flex: 1; height: 1px; margin-right: 20px; background: #fff; }
.pane-main { display: flex; margin: 4px 11px 0 0; }
.form { flex: 1; padding-right: 3px; }
.form h3 { display: flex; align-items: center; gap: 7px; height: 18px; padding-left: 9px; font-weight: 700; }
.choices { margin: 10px 0 0 24px; padding-bottom: 6px; border-bottom: 1px solid #3a3d59; }
.choices label { display: flex; align-items: center; height: 26px; }
.choices label span { margin-left: auto; width: calc(100% - 20px); }
.choices input { appearance: none; flex: none; width: 11px; height: 11px; margin-left: 2px; border-radius: 6px; background: #43476b; }
.choices input:checked { background: radial-gradient(#d5d9ff 0 3px, #555a85 4px); }
.choices input[type=checkbox] { width: 15px; height: 15px; margin: 0; border-radius: 0; }
.fields { display: flex; flex-direction: column; gap: 6px; padding: 9px 0 0 34px; }
.field { display: flex; align-items: center; justify-content: space-between; }
.in { padding-left: 11px; }
.drop { width: 48px; height: 30px; gap: 6px; padding-left: 2px; justify-content: center; background: #30334f; border: 1px solid #565b85; }
.pick, .num { position: relative; display: flex; align-items: center; background: #30334f; border: 1px solid #565b85; }
.pick { width: 98px; height: 24px; }
.pick select { appearance: none; width: 100%; padding-left: 5px; }
.pick svg, .num svg { position: absolute; right: 5px; }
.num { width: 113px; height: 27px; }
.num input { width: 88px; padding: 0 0 2px 6px; }
.low { height: 18px; }
.stops { height: 31px; justify-content: flex-start; padding-left: 18px; gap: 10px; }
.ramp { flex: 1; height: 20px; margin: 0 6px 5px 0; border: 1px solid #fff; background: linear-gradient(90deg, #000 50%, #eef2ff 50%); display: flex; justify-content: center; }
.ramp svg { margin-top: -4px; }
.sq { width: 26px; height: 27px; justify-content: center; background: #30334f; border: 1px solid #565b85; }
.slide-bar { appearance: none; width: 38px; height: 12px; margin: 0 6px 0 auto; background: linear-gradient(#fff, #fff) center / 100% 1px no-repeat; }
.slide-bar::-webkit-slider-thumb { appearance: none; width: 2px; height: 11px; background: #fff; }
.rotate { display: flex; align-items: center; height: 16px; padding-left: 6px; gap: 4px; color: #5a5f88; }
.rotate input { appearance: none; width: 12px; height: 14px; background: #232640; }
.scroll { width: 19px; height: 534px; display: flex; flex-direction: column; align-items: center; padding: 5px 0 6px; gap: 8px; border-radius: 9px; background: #11131d; }
.scroll i { width: 9px; flex: 1; border-radius: 5px; background: #8b90d0; }
.actions { display: flex; gap: 10px; padding-top: 6px; }
.actions button { height: 27px; padding: 0 9px; background: #30334f; border: 1px solid #565b85; }

.status { display: flex; align-items: center; height: 25px; padding: 0 75px 2px 8px; border-top: 2px solid #2b2d3f; background: #12131f; line-height: 18px; white-space: nowrap; }
.s-page { width: 194px; }
.s-lang { width: 97px; }
.s-notes { margin-left: auto; gap: 0; }
.s-grid { margin: 0 108px 0 77px; }
.zoom { display: flex; align-items: center; gap: 6px; }
.zoom input { appearance: none; width: 109px; height: 12px; background: linear-gradient(#666b96, #666b96) center / 100% 2px no-repeat; }
.zoom input::-webkit-slider-thumb { appearance: none; width: 4px; height: 10px; background: #9ea3d0; }

.mark { position: absolute; right: 84px; bottom: 31px; pointer-events: none; }
.brand { font: 700 64px "Liberation Sans", Arial, sans-serif; }
.cjk { font: 900 48px "Noto Sans CJK SC", sans-serif; }
.du { font: 700 34px "Liberation Sans", Arial, sans-serif; fill: #22232c; }
.site { font: 500 32px "Noto Sans", sans-serif; fill: #dadada; fill-opacity: .92; }
.arrow { position: absolute; left: 0; top: 0; pointer-events: none; filter: drop-shadow(1px 3px 2px #0008); }
.frame i { position: fixed; pointer-events: none; --c: #87527d; }
.top { left: 4px; right: 1px; top: 0; height: 18px; border-radius: 6px 6px 0 0; background: repeating-linear-gradient(90deg, var(--c) 0 76px, transparent 76px 114px) -30px 0 / 200vw 100%; }
.left { left: 4px; top: 0; bottom: 12px; width: 19px; border-radius: 6px 0 0 0; background: repeating-linear-gradient(var(--c) 0 76px, transparent 76px 114px) 0 -44px / 100% 200vh; }
.right { right: 1px; top: 0; bottom: 1px; width: 19px; border-radius: 0 6px 6px 0; background: repeating-linear-gradient(var(--c) 0 76px, transparent 76px 114px) 0 -27px / 100% 200vh; }
.bottom { left: 34px; right: 1px; bottom: 1px; height: 20px; border-radius: 0 0 6px 0; background: repeating-linear-gradient(90deg, var(--c) 0 76px, transparent 76px 114px); }
```
